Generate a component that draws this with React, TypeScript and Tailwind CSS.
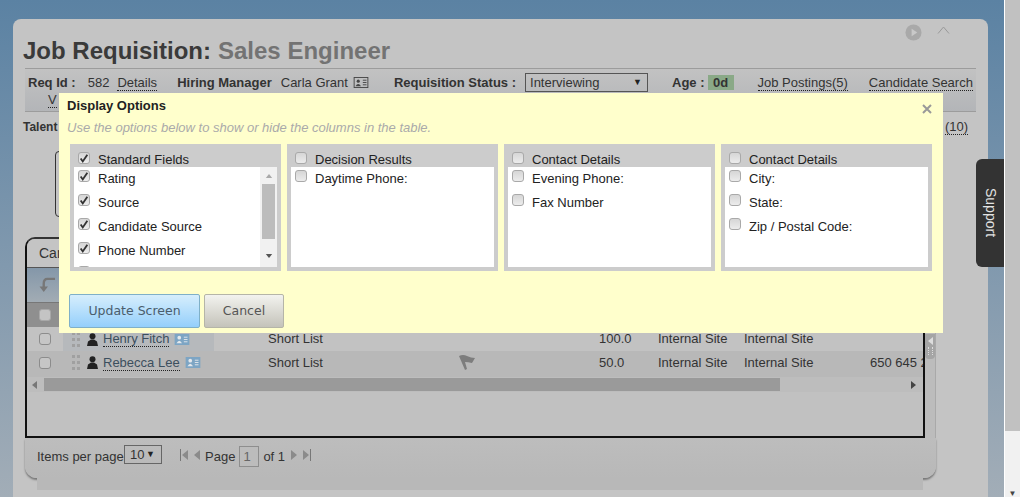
import React from 'react';

type Tone = 'dialog' | 'row' | 'header';

const CHECKBOX_TONES: Record<Tone, string> = {
  dialog: 'border-[#a9a9a9] bg-gradient-to-b from-[#d6d6d6] to-[#ececec]',
  row: 'border-[#8c8c8c] bg-[#c6c6c6]',
  header: 'border-[#a8a8a8] bg-[#c4c4c4]',
};

const Checkbox = ({ checked = false, tone = 'dialog' }: { checked?: boolean; tone?: Tone }) => (
  <span className={`flex size-[12px] shrink-0 items-center justify-center rounded-[3px] border ${CHECKBOX_TONES[tone]}`}>
    {checked && (
      <svg viewBox="0 0 12 12" className="size-[11px]">
        <path d="M2 6 L4.5 9.5 L10 1.5" fill="none" stroke="#333" strokeWidth="2.2" />
      </svg>
    )}
  </span>
);

const CardIcon = ({ className }: { className: string }) => (
  <svg viewBox="0 0 16 12" className={className}>
    <rect width="16" height="12" fill="currentColor" />
    <circle cx="5" cy="4" r="2" fill="#e4e8ec" />
    <path d="M2 10 Q5 4.5 8 10 Z" fill="#e4e8ec" />
    <path d="M10 3.5 H14 M10 6 H14 M10 8.5 H14" stroke="#e4e8ec" strokeWidth="1" />
  </svg>
);

const OutlineCardIcon = () => (
  <svg viewBox="0 0 16 12" className="ml-[5px] h-[11px] w-[16px]">
    <rect x="0.5" y="0.5" width="15" height="11" fill="none" stroke="#444" />
    <circle cx="5" cy="4.5" r="1.7" fill="#444" />
    <path d="M2 10 Q5 5 8 10 Z" fill="#444" />
    <path d="M10 3.5 H14 M10 6 H14 M10 8.5 H14" stroke="#444" strokeWidth="1" />
  </svg>
);

const PersonIcon = () => (
  <svg viewBox="0 0 11 13" className="h-[13px] w-[11px] shrink-0">
    <circle cx="5.5" cy="3.2" r="3" fill="#222" />
    <path d="M0 13 L1 8.5 L4 6.5 H7 L10 8.5 L11 13 Z" fill="#222" />
  </svg>
);

const DragDots = () => (
  <span className="grid w-[8px] shrink-0 grid-cols-2 gap-x-[2px] gap-y-[3px]">
    {[0, 1, 2, 3, 4, 5].map((i) => (
      <span key={i} className="size-[3px] bg-[#a0a0a0]" />
    ))}
  </span>
);

const Triangle = ({ dir, bar = false }: { dir: 'left' | 'right'; bar?: boolean }) => (
  <svg viewBox="0 0 10 12" className="h-[12px] w-[10px] shrink-0">
    <path d={dir === 'left' ? 'M8 1 V11 L2 6 Z' : 'M2 1 V11 L8 6 Z'} fill="#8b8b8b" />
    {bar && <path d={dir === 'left' ? 'M0.5 0 V12' : 'M9.5 0 V12'} stroke="#777" />}
  </svg>
);

const Dotted = ({ children }: { children: React.ReactNode }) => (
  <span className="border-b border-dotted border-[#222] leading-[15px]">{children}</span>
);

const ROWS = [
  { name: 'Henry Fitch', rank: '100.0', phone: '', flag: false, rowBg: 'bg-[#c2c2c2]', nameBg: 'bg-[#b6b9bc]', h: 'h-[24px]' },
  { name: 'Rebecca Lee', rank: '50.0', phone: '650 645 2', flag: true, rowBg: 'bg-[#b8b8b8]', nameBg: 'bg-[#b8b8b8]', h: 'h-[26px] pb-[3px]' },
];

const COLUMNS = [
  { title: 'Standard Fields', checked: true, scroll: true, items: ['Rating', 'Source', 'Candidate Source', 'Phone Number', ''] },
  { title: 'Decision Results', checked: false, scroll: false, items: ['Daytime Phone:'] },
  { title: 'Contact Details', checked: false, scroll: false, items: ['Evening Phone:', 'Fax Number'] },
  { title: 'Contact Details', checked: false, scroll: false, items: ['City:', 'State:', 'Zip / Postal Code:'] },
];

const App: React.FC = () => {
  return (
    <div className="relative flex h-[497px] w-[1025px] overflow-hidden bg-white font-['Liberation_Sans',Arial,sans-serif] text-[13px] text-[#333]">
      {/* page */}
      <div className="h-full w-[1004px] bg-gradient-to-b from-[#5b82a3] to-[#a2adb7] pl-[13px] pr-[16px] pt-[19px]">
        <div className="h-[478px] rounded-t-[8px] bg-[#c4c4c4] pl-[10px]">
          <div className="relative flex h-[49px] items-end pb-[3px] text-[24px] font-bold leading-[28px] text-[#3a3a3a]">
            <span>Job Requisition:</span>
            <span className="ml-[7px] text-[#737373]">Sales Engineer</span>
            <svg viewBox="0 0 18 18" className="absolute left-[882px] top-[5px] size-[17px]">
              <circle cx="9" cy="9" r="8.5" fill="#a9a9a9" />
              <path d="M7 5 L13 9 L7 13 Z" fill="#c9c9c9" />
            </svg>
            <svg viewBox="0 0 13 8" className="absolute left-[914px] top-[7px] h-[8px] w-[13px]">
              <path d="M1 7.5 L6.5 1 L12 7.5" fill="none" stroke="#999" />
            </svg>
          </div>

          {/* requisition info */}
          <div className="ml-[2px] h-[44px] w-[951px] border-y border-[#9c9c9c] bg-gradient-to-b from-[#c2c2c2] to-[#b3b5b8] pl-[3px]">
            <div className="flex h-[27px] items-center">
              <b>Req Id :</b>
              <b className="ml-[12px] font-normal">582</b>
              <span className="ml-[8px]"><Dotted>Details</Dotted></span>
              <b className="ml-[20px]">Hiring Manager</b>
              <span className="ml-[9px]">Carla Grant</span>
              <OutlineCardIcon />
              <b className="ml-[25px]">Requisition Status :</b>
              <span className="ml-[9px] flex h-[19px] w-[123px] items-center justify-between border border-[#555] pl-[4px] pr-[5px]">
                Interviewing <span className="text-[9px] text-[#222]">▼</span>
              </span>
              <b className="ml-[24px]">Age :</b>
              <span className="ml-[3px] flex h-[15px] w-[26px] items-center justify-center bg-[#8aa987] font-bold">0d</span>
              <span className="ml-[24px]"><Dotted>Job Postings(5)</Dotted></span>
              <span className="ml-[21px]"><Dotted>Candidate Search</Dotted></span>
            </div>
            <div className="-mt-[3px] ml-[20px] flex h-[14px] items-center">
              <Dotted>V</Dotted>
            </div>
          </div>

          <div className="flex h-[39px] w-[945px] justify-between pt-[6px] text-[12px]">
            <b>Talent</b>
            <span className="-mt-[1px] text-[13px]"><Dotted>(10)</Dotted></span>
          </div>
          <div className="ml-[32px] h-[66px] w-[100px] rounded-[4px] border border-[#333]" />

          {/* candidates table */}
          <div className="ml-[2px] mt-[20px] flex h-[201px] w-[911px]">
            <div className="flex h-full w-[900px] flex-col overflow-hidden rounded-tl-[10px] border-2 border-[#111] border-t-[#333]">
              <div className="flex h-[29px] shrink-0 items-center border-b border-[#555] bg-[#c4c4c4] pl-[12px] text-[14px]">Cand</div>
              <div className="flex h-[35px] shrink-0 items-center border-b border-[#777] bg-gradient-to-b from-[#8497a9] to-[#a2acb4] pl-[12px]">
                <svg viewBox="0 0 18 17" className="h-[16px] w-[17px]">
                  <path d="M17 2 H9 Q5 2 5 7 V13" fill="none" stroke="#777" strokeWidth="2.5" />
                  <path d="M0.5 10 H9.5 L5 16 Z" fill="#777" />
                </svg>
              </div>
              <div className="flex h-[24px] shrink-0 items-center bg-[#8f8f8f] pl-[12px]">
                <Checkbox tone="header" />
              </div>
              {ROWS.map((row) => (
                <div key={row.name} className={`flex shrink-0 items-center whitespace-nowrap ${row.h} ${row.rowBg}`}>
                  <span className="flex w-[36px] shrink-0 justify-end"><span className="mr-[12px]"><Checkbox tone="row" /></span></span>
                  <span className={`flex h-full w-[151px] shrink-0 items-center pl-[9px] ${row.nameBg}`}>
                    <DragDots />
                    <span className="ml-[7px]"><PersonIcon /></span>
                    <span className="ml-[5px] text-[#3c4f5e]"><Dotted>{row.name}</Dotted></span>
                    <CardIcon className="ml-[5px] h-[11px] w-[16px] text-[#7da5c4]" />
                  </span>
                  <span className="ml-[54px] w-[191px] shrink-0">Short List</span>
                  <span className="w-[140px] shrink-0">
                    {row.flag && (
                      <svg viewBox="0 0 17 15" className="h-[15px] w-[17px]">
                        <path d="M0 1 Q4 -1 8 1 T16 3 L13 8 Q9 7 6 7 L8 14 L6 15 Z" fill="#7d7d7d" />
                      </svg>
                    )}
                  </span>
                  <span className="w-[59px] shrink-0">{row.rank}</span>
                  <span className="w-[86px] shrink-0">Internal Site</span>
                  <span className="w-[126px] shrink-0">Internal Site</span>
                  <span>{row.phone}</span>
                </div>
              ))}
              <div className="flex h-[15px] shrink-0 items-center bg-[#bdbdbd] pl-[5px] pr-[7px]">
                <svg viewBox="0 0 5 8" className="h-[8px] w-[5px]"><path d="M5 0 V8 L0 4 Z" fill="#777" /></svg>
                <div className="ml-[7px] h-[13px] w-[736px] bg-[#9a9a9a]" />
                <svg viewBox="0 0 5 8" className="ml-auto h-[8px] w-[5px]"><path d="M0 0 V8 L5 4 Z" fill="#444" /></svg>
              </div>
              <div className="flex-1 bg-[#c1c1c1]" />
            </div>
            {/* vertical scrollbar */}
            <div className="flex h-full w-[11px] flex-col justify-start border-r border-[#a9a9a9] bg-[#bcbcbc] pt-[97px]">
              <div className="flex h-[25px] w-[10px] flex-col items-center gap-[2px] rounded-b-[4px] bg-[#a5a5a5] pt-[3px]">
                <svg viewBox="0 0 5 8" className="h-[8px] w-[5px]"><path d="M5 0 V8 L0 4 Z" fill="#ddd" /></svg>
                <span className="h-[8px] w-[5px] border-x border-dotted border-[#ddd]" />
              </div>
            </div>
          </div>

          {/* pager */}
          <div className="ml-[2px] flex h-[40px] w-[911px] items-start rounded-b-[12px] bg-gradient-to-b from-[#bdbdbd] to-[#b8b8b8] pl-[12px] pt-[7px] shadow-[0_2px_2px_#777]">
            <span className="mt-[2px] w-[87px]">Items per page</span>
            <span className="flex h-[19px] w-[38px] items-center justify-between border border-[#666] pl-[5px] pr-[6px]">
              10 <span className="text-[9px] text-[#222]">▼</span>
            </span>
            <span className="ml-[18px] mt-[4px] flex items-center gap-[2px]">
              <Triangle dir="left" bar />
              <Triangle dir="left" />
            </span>
            <span className="ml-[3px] mt-[2px]">Page</span>
            <span className="ml-[4px] mt-[1px] flex h-[21px] w-[20px] items-end border border-[#8e8e8e] bg-[#bcbcbc] pb-[1px] pl-[3px] leading-[16px] text-[#666]">1</span>
            <span className="ml-[4px] mt-[2px]">of 1</span>
            <span className="ml-[4px] mt-[4px] flex items-center gap-[2px]">
              <Triangle dir="right" />
              <Triangle dir="right" bar />
            </span>
          </div>
          <div className="ml-[14px] h-[12px] w-[886px] bg-[#b8b8b8]" />
        </div>
      </div>

      {/* window scrollbar */}
      <div className="flex h-full w-[16px] flex-col items-center border-l border-white bg-[#f1f1f1]">
        <div className="h-[431px] w-full bg-[#c1c1c1]" />
        <span className="mt-auto text-[8px] leading-[6px] text-[#444]">▼</span>
      </div>

      {/* support tab */}
      <div className="absolute left-[976px] top-[159px] flex h-[108px] w-[28px] items-center justify-center rounded-l-[6px] bg-[#333]">
        <span className="text-[14px] text-[#e2e2e2] [writing-mode:vertical-rl]">Support</span>
      </div>

      {/* display options dialog */}
      <div className="absolute left-[59px] top-[93px] h-[240px] w-[884px] bg-[#ffffcc] pl-[8px]">
        <div className="flex h-[24px] items-center justify-between pr-[11px]">
          <b className="pt-[2px] text-[13px] text-[#222]">Display Options</b>
          <svg viewBox="0 0 10 10" className="mt-[8px] size-[10px]">
            <path d="M1 1 L9 9 M9 1 L1 9" stroke="#999" strokeWidth="2" />
          </svg>
        </div>
        <p className="mt-[3px] text-[13px] italic leading-[16px] text-[#aaaaaa]">
          Use the options below to show or hide the columns in the table.
        </p>
        <div className="ml-[3px] mt-[8px] flex gap-[6px]">
          {COLUMNS.map((col, i) => (
            <div key={i} className="flex h-[127px] w-[211px] flex-col bg-[#cccccc] px-[4px] pb-[4px]">
              <div className="flex h-[23px] shrink-0 items-start text-[#222]">
                <span className="ml-[4px] mt-[8px]"><Checkbox checked={col.checked} /></span>
                <span className="ml-[8px] mt-[8px] leading-[15px]">{col.title}</span>
              </div>
              <div className="flex min-h-0 flex-1 overflow-hidden bg-white">
                <ul className="min-w-0 flex-1 pl-[4px] text-[#222]">
                  {col.items.map((item) => (
                    <li key={item} className="flex h-[24px] items-start pt-[3px]">
                      <Checkbox checked={col.checked} />
                      <span className="ml-[8px] mt-[1px] leading-[15px]">{item}</span>
                    </li>
                  ))}
                </ul>
                {col.scroll && (
                  <div className="flex w-[17px] shrink-0 flex-col items-center bg-[#f1f1f1] pt-[7px]">
                    <svg viewBox="0 0 8 5" className="h-[4px] w-[8px]"><path d="M0 5 L4 0 L8 5 Z" fill="#a9a9a9" /></svg>
                    <div className="mt-[6px] h-[55px] w-[13px] bg-[#bcbcbc]" />
                    <svg viewBox="0 0 8 5" className="mt-[15px] h-[4px] w-[8px]"><path d="M0 0 L4 5 L8 0 Z" fill="#555" /></svg>
                  </div>
                )}
              </div>
            </div>
          ))}
        </div>
        <div className="ml-[2px] mt-[23px] flex gap-[4px] font-['DejaVu_Sans',sans-serif]">
          <button className="h-[34px] w-[131px] rounded-[2px] border border-[#7fb0c8] bg-gradient-to-b from-[#d6eefc] to-[#94cffb] text-[12.5px] text-[#4a5d6c]">
            Update Screen
          </button>
          <button className="h-[34px] w-[80px] rounded-[2px] border border-[#b5b5a8] bg-gradient-to-b from-[#f3f3ef] to-[#c4c3ba] text-[12.5px] text-[#555]">
            Cancel
          </button>
        </div>
      </div>
    </div>
  );
};

export default App;
